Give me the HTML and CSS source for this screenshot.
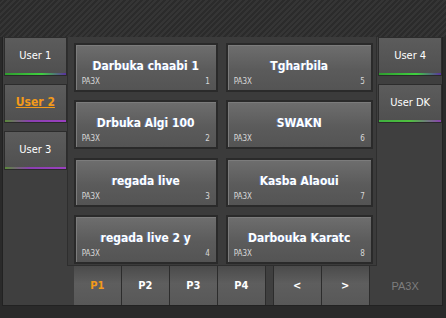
FILE: index.html
```html
<!DOCTYPE html>
<html lang="en">
<head>
    <meta charset="UTF-8">
    <meta name="viewport" content="width=device-width, initial-scale=1.0">
    <title>PA3X Styles</title>
    <link rel="stylesheet" href="styles.css">
</head>
<body>
    <div class="top-band"></div>
    <div class="app">
        <div class="side side-left">
            <button class="user-btn line-green">User 1</button>
            <button class="user-btn user-active line-purple">User 2</button>
            <button class="user-btn line-purple">User 3</button>
        </div>
        <div class="center">
            <div class="styles-panel">
                <div class="style-card"><span class="card-title">Darbuka chaabi 1</span><span class="card-foot"><span>PA3X</span><span>1</span></span></div>
                <div class="style-card"><span class="card-title">Tgharbila</span><span class="card-foot"><span>PA3X</span><span>5</span></span></div>
                <div class="style-card"><span class="card-title">Drbuka Algi 100</span><span class="card-foot"><span>PA3X</span><span>2</span></span></div>
                <div class="style-card"><span class="card-title">SWAKN</span><span class="card-foot"><span>PA3X</span><span>6</span></span></div>
                <div class="style-card"><span class="card-title">regada live</span><span class="card-foot"><span>PA3X</span><span>3</span></span></div>
                <div class="style-card"><span class="card-title">Kasba Alaoui</span><span class="card-foot"><span>PA3X</span><span>7</span></span></div>
                <div class="style-card"><span class="card-title">regada live 2 y</span><span class="card-foot"><span>PA3X</span><span>4</span></span></div>
                <div class="style-card"><span class="card-title">Darbouka Karatc</span><span class="card-foot"><span>PA3X</span><span>8</span></span></div>
            </div>
            <div class="page-bar">
                <button class="page-btn page-active">P1</button>
                <button class="page-btn">P2</button>
                <button class="page-btn">P3</button>
                <button class="page-btn">P4</button>
                <span class="page-gap"></span>
                <button class="page-btn">&lt;</button>
                <button class="page-btn">&gt;</button>
            </div>
        </div>
        <div class="side side-right">
            <button class="user-btn line-green">User 4</button>
            <button class="user-btn line-mixed">User DK</button>
            <div class="brand">PA3X</div>
        </div>
    </div>
</body>
</html>
```

FILE: styles.css
```css
body {
    margin: 0;
    width: 446px;
    height: 318px;
    background-color: #2a2a2a;
    font-family: "DejaVu Sans Condensed", "DejaVu Sans", sans-serif;
    color: #fff;
    overflow: hidden;
}
.top-band {
    height: 37px;
    background: repeating-linear-gradient(-45deg, #2b2b2b 0, #2b2b2b 2px, #353535 2px, #353535 4px);
}
.app {
    display: flex;
    margin-left: 2px;
    width: 439px;
    height: 268px;
    background-color: #3f3f3f;
    border: 1px solid #222;
    border-top: none;
}
.side {
    display: flex;
    flex-direction: column;
    gap: 8px;
    width: 64px;
    padding-left: 1px;
    box-sizing: border-box;
}
.side-right {
    width: 65px;
    padding-left: 1px;
}
button {
    font-family: inherit;
    cursor: pointer;
}
.user-btn {
    height: 39px;
    padding: 0 0 4px;
    border: 1px solid #2c2c2c;
    border-bottom: none;
    background: linear-gradient(to bottom, #5c5c5c, #4f4f4f);
    color: #fff;
    font-size: 11px;
    position: relative;
}
.user-btn::after {
    content: "";
    position: absolute;
    left: 0;
    right: 0;
    bottom: 0;
    height: 2px;
    border-bottom: 1px solid #2a2a2a;
}
.line-green::after {
    background: linear-gradient(to right, #2f9c2f, #3fd03f 60%, #5a2fa0);
}
.line-purple::after {
    background: linear-gradient(to right, #5a8a3a, #8a3fb0 40%, #9a40c0);
}
.line-mixed::after {
    background: linear-gradient(to right, #3fb03f, #4fc03f 50%, #8a3fb0);
}
.user-active {
    color: #f39a1a;
    font-weight: bold;
    text-decoration: underline;
    font-size: 12px;
}
.center {
    display: flex;
    flex-direction: column;
    width: 312px;
}
.styles-panel {
    display: grid;
    grid-template-columns: 144px 147px;
    column-gap: 8px;
    row-gap: 7px;
    height: 230px;
    box-sizing: border-box;
    padding: 6px 0 0 6px;
    border-left: 1px solid #2e2e2e;
    border-right: 1px solid #2e2e2e;
    border-bottom: 1px solid #2e2e2e;
    background-color: #3b3b3b;
}
.style-card {
    height: 49px;
    box-sizing: border-box;
    border: 2px solid #2a2a2a;
    background: linear-gradient(to bottom, #6e6e6e, #5b5b5b 55%, #545454);
    box-shadow: inset 1px 1px 0 #7c7c7c;
    display: flex;
    flex-direction: column;
    padding: 0 6px 3px 6px;
}
.card-title {
    flex: 1;
    display: flex;
    align-items: center;
    justify-content: center;
    padding-top: 10px;
    font-size: 12px;
    font-weight: bold;
    text-shadow: -1px 0 rgba(90, 150, 255, 0.45);
}
.card-foot {
    display: flex;
    justify-content: space-between;
    font-size: 8px;
    color: #d8d8d8;
    line-height: 10px;
}
.page-bar {
    display: flex;
    height: 39px;
    margin-left: 7px;
}
.page-btn {
    width: 48px;
    height: 39px;
    border: none;
    border-right: 1px solid #2c2c2c;
    background: linear-gradient(to bottom, #4b4b4b, #5e5e5e 45%, #585858);
    color: #fff;
    font-size: 11px;
    font-weight: bold;
    padding: 0;
}
.page-active {
    color: #f39a1a;
}
.page-gap {
    width: 7px;
    border-right: 1px solid #2c2c2c;
}
.brand {
    margin-top: auto;
    height: 39px;
    display: flex;
    align-items: center;
    justify-content: center;
    padding-right: 10px;
    color: #7d7d7d;
    font-size: 11px;
    font-family: "Liberation Sans", Arial, sans-serif;
}
```
